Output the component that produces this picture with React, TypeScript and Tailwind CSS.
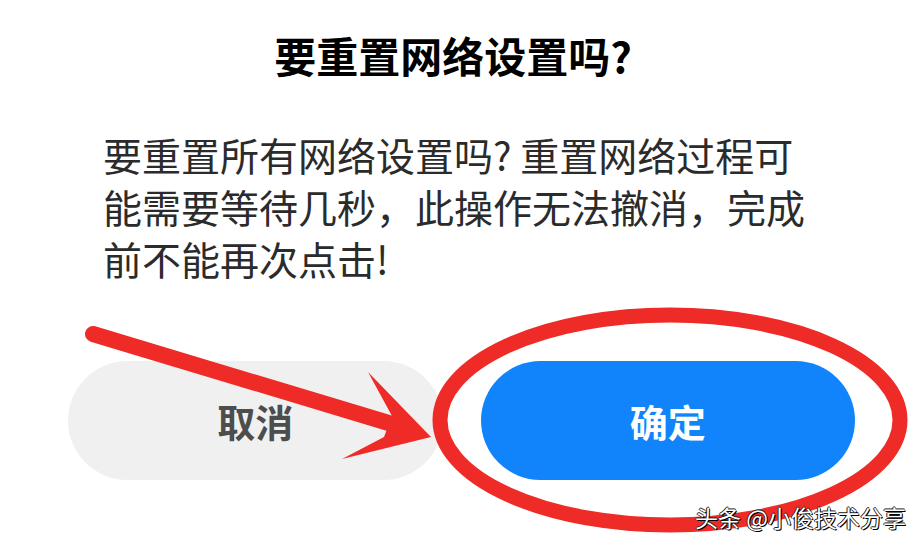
import React from 'react'

// Red hand-drawn style marks laid over the dialog: an arrow and a ring around the confirm button
function Annotations() {
  return (
    <svg className="absolute inset-0 pointer-events-none" width={923} height={545} viewBox="0 0 923 545">
      <line x1={93} y1={334} x2={392} y2={424} stroke="#ee2b26" strokeWidth={16} strokeLinecap="round" />
      <polygon points="431,437 368,372 392,416 384,437 342,459" fill="#ee2b26" />
      <ellipse cx={670} cy={420} rx={230} ry={105} fill="none" stroke="#ee2b26" strokeWidth={15} />
    </svg>
  )
}

export default function App() {
  return (
    <div
      className="relative w-[923px] h-[545px] overflow-hidden bg-white"
      style={{ fontFamily: '"Noto Sans CJK SC", "Noto Sans", sans-serif' }}
    >
      <h1 className="pt-[29px] pr-[17px] text-center text-[42px] leading-[52px] font-bold text-black">
        要重置网络设置吗?
      </h1>

      <p className="mt-[47px] px-[103px] text-[39px] leading-[52px] text-[#2b2b2b]">
        要重置所有网络设置吗? 重置网络过程可
        <br />
        能需要等待几秒，此操作无法撤消，完成
        <br />
        前不能再次点击!
      </p>

      <div className="mt-[77px] flex gap-[38px] px-[68px]">
        <button className="flex h-[119px] flex-1 items-center justify-center rounded-full bg-[#f0f0f0] text-[38px] font-bold text-[#4d4d4d]">
          取消
        </button>
        <button className="flex h-[119px] flex-1 items-center justify-center rounded-full bg-[#1184fc] text-[38px] font-bold text-white">
          确定
        </button>
      </div>

      <Annotations />

      <div className="absolute right-[17px] bottom-[14px] text-[23px] leading-[28px] text-white [text-shadow:1px_1px_0_#000,-1px_0_0_#222,0_-1px_0_#222,0_0_1px_#000]">
        头条 @小俊技术分享
      </div>
    </div>
  )
}
